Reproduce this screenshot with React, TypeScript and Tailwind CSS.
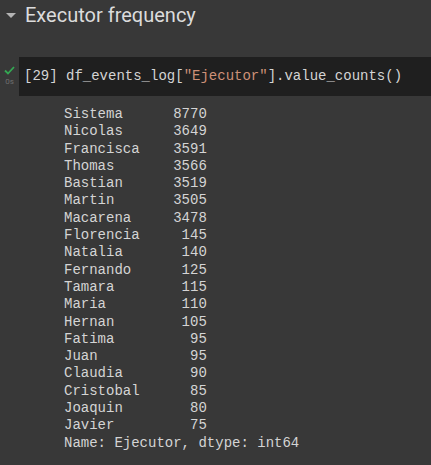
const rows: [string, string][] = [
  ["Sistema", "8770"],
  ["Nicolas", "3649"],
  ["Francisca", "3591"],
  ["Thomas", "3566"],
  ["Bastian", "3519"],
  ["Martin", "3505"],
  ["Macarena", "3478"],
  ["Florencia", "145"],
  ["Natalia", "140"],
  ["Fernando", "125"],
  ["Tamara", "115"],
  ["Maria", "110"],
  ["Hernan", "105"],
  ["Fatima", "95"],
  ["Juan", "95"],
  ["Claudia", "90"],
  ["Cristobal", "85"],
  ["Joaquin", "80"],
  ["Javier", "75"],
];

const output =
  rows.map(([name, n]) => name.padEnd(9, " ") + n.padStart(8, " ")).join("\n") +
  "\nName: Ejecutor, dtype: int64";

export default function App() {
  return (
    <div className="h-[465px] w-[431px] overflow-hidden bg-[#383838]">
      <div className="flex h-[30px] items-center gap-[9px] pl-[6px]">
        <svg width="10" height="6" viewBox="0 0 10 6" className="mt-[1px]">
          <path d="M0 0 L10 0 L5 5 Z" fill="#b4b4b4" />
        </svg>
        <span className="font-['Roboto',sans-serif] text-[20px] text-[#dcdcdc]">Executor frequency</span>
      </div>

      <div className="mt-[27px] flex">
        <div className="flex w-[19px] flex-col items-center pt-[9px]">
          <svg width="11" height="9" viewBox="0 0 11 9">
            <path d="M1 4.5 L4 7.5 L10 1" fill="none" stroke="#34a853" strokeWidth="1.8" />
          </svg>
          <span className="mt-[3px] font-['Roboto',sans-serif] text-[8px] leading-none text-[#6e6e6e]">0s</span>
        </div>
        <div className="flex h-[39px] flex-1 items-center bg-[#1f1f1f] pl-[5px] font-['Liberation_Mono',monospace] text-[14px] text-[#d4d4d4]">
          <pre className="font-['Liberation_Mono',monospace]">
            [29] df_events_log[<span className="text-[#ce9178]">"Ejecutor"</span>].value_counts()
          </pre>
        </div>
      </div>

      <pre className="ml-[64px] mt-[10px] font-['Liberation_Mono',monospace] text-[14px] leading-[17.3px] text-[#d4d4d4]">
        {output}
      </pre>
    </div>
  );
}
